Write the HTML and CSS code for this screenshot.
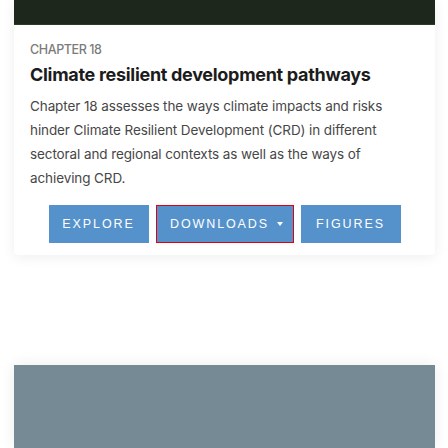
FILE: index.html
```html
<!DOCTYPE html>
<html lang="en">
<head>
<meta charset="utf-8">
<title>Chapter 18</title>
<link rel="stylesheet" href="styles.css">
</head>
<body>
<main class="page">
  <section class="card">
    <div class="card-top"></div>
    <div class="card-body">
      <p class="eyebrow">Chapter 18</p>
      <h1 class="title">Climate resilient development pathways</h1>
      <p class="desc">Chapter 18 assesses the ways climate impacts and risks hinder Climate Resilient Development (CRD) in different sectoral and regional contexts as well as the ways of achieving CRD.</p>
      <div class="actions">
        <a class="btn btn-explore" href="#">Explore</a>
        <a class="btn btn-downloads" href="#">Downloads <span class="caret"></span></a>
        <a class="btn btn-figures" href="#">Figures</a>
      </div>
    </div>
  </section>
  <section class="media"></section>
</main>
</body>
</html>
```

FILE: styles.css
```css
* { box-sizing: border-box; }
html, body { margin: 0; padding: 0; background: #ffffff; }
body { font-family: Inter, "Liberation Sans", Arial, sans-serif; }
.page {
  padding: 0 13px 0 14px;
  display: flex;
  flex-direction: column;
  gap: 110px;
}
.card {
  background: #fff;
  border-radius: 0 0 4px 4px;
  box-shadow: 0 2px 14px rgba(0,0,0,0.07);
}
.card-top {
  height: 25px;
  background: #1e271c;
  border-bottom: 1px solid #2b3a29;
}
.card-body {
  padding: 17px 16px 12px 16px;
}
.eyebrow {
  margin: 0;
  font-size: 12.5px;
  line-height: 16px;
  font-weight: 500;
  color: #7b7b7b;
  text-transform: uppercase;
  letter-spacing: -0.4px;
}
.title {
  margin: 5px 0 0 0;
  font-size: 18px;
  line-height: 24px;
  font-weight: 700;
  color: #1c1c1c;
  letter-spacing: -0.3px;
}
.desc {
  margin: 7px 0 0 0;
  font-size: 13.5px;
  line-height: 24px;
  color: #474747;
  padding-right: 8px;
  letter-spacing: -0.1px;
}
.actions {
  display: flex;
  justify-content: center;
  gap: 7px;
  margin-top: 15px;
}
.btn {
  display: flex;
  align-items: center;
  justify-content: center;
  height: 38px;
  background: #5592cc;
  color: #fff;
  text-decoration: none;
  text-transform: uppercase;
  font-family: "Liberation Sans", Arial, sans-serif;
  font-size: 12.5px;
  letter-spacing: 1.9px;
}
.btn-explore, .btn-figures { width: 100px; }
.btn-downloads {
  width: 138px;
  border: 1px solid #e0000f;
  gap: 8px;
  padding-left: 4px;
}
.caret {
  width: 0;
  height: 0;
  border-left: 3.5px solid transparent;
  border-right: 3.5px solid transparent;
  border-top: 4px solid #fff;
}
.media {
  height: 83px;
  background: #768a96;
  box-shadow: 0 0 14px rgba(0,0,0,0.08);
}
```
